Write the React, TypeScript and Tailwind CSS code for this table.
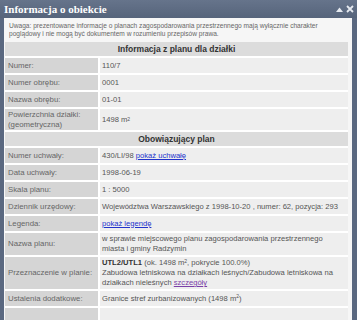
import React from "react";

const Row = ({ label, children }: { label: React.ReactNode; children?: React.ReactNode }) => (
  <div className="flex gap-[2px]">
    <div className="w-[93px] shrink-0 bg-[#d5d5d5] text-[#666] text-[7.8px] px-[3px] py-[1px] min-h-[15px] flex items-center leading-[9.5px]">
      {label}
    </div>
    <div className="flex-1 bg-[#eeeeee] text-[#555] text-[7.6px] px-[2px] py-[1px] min-h-[15px] flex items-center leading-[10px] whitespace-nowrap">
      <div>{children}</div>
    </div>
  </div>
);

const Header = ({ children }: { children: React.ReactNode }) => (
  <div className="bg-[#dcdcdc] h-[14px] flex items-center justify-center text-[8.5px] font-bold text-[#333]">
    {children}
  </div>
);

const Link = ({ children, visited }: { children: React.ReactNode; visited?: boolean }) => (
  <span className={visited ? "text-[#7b3fa8] underline" : "text-[#2233cc] underline"}>{children}</span>
);

export default function App() {
  return (
    <div
      className="w-[357px] h-[320px] bg-[#5a6880] overflow-hidden flex flex-col"
      style={{ fontFamily: '"Liberation Sans", Arial, sans-serif' }}
    >
      <div className="h-[18px] shrink-0 flex items-center justify-between pl-[4px] pr-[3px] bg-gradient-to-b from-[#66748b] to-[#56647b]">
        <span
          className="text-white font-bold text-[11px] leading-none"
          style={{ fontFamily: '"Liberation Serif", "Times New Roman", serif' }}
        >
          Informacja o obiekcie
        </span>
        <div className="flex items-center gap-[3px] text-[#e8ecf2]">
          <svg width="7" height="5" viewBox="0 0 7 5">
            <path d="M0 5 L3.5 0.5 L7 5 Z" fill="#e6eaf0" />
          </svg>
          <svg width="8" height="8" viewBox="0 0 8 8">
            <path d="M1 1 L7 7 M7 1 L1 7" stroke="#e6eaf0" strokeWidth="1.8" />
          </svg>
        </div>
      </div>
      <div className="flex-1 ml-[4px] mr-[5px] bg-[#f6f6f6] px-[1px] pr-[4px] overflow-hidden">
        <div className="text-[6.6px] leading-[7.5px] text-[#666] pl-[4px] pt-[4px] pb-[5px] whitespace-nowrap">
          Uwaga: prezentowane informacje o planach zagospodarowania przestrzennego mają wyłącznie charakter
          <br />
          poglądowy i nie mogą być dokumentem w rozumieniu przepisów prawa.
        </div>
        <div className="flex flex-col gap-[2px] bg-white">
          <Header>Informacja z planu dla działki</Header>
          <Row label="Numer:">110/7</Row>
          <Row label="Numer obrębu:">0001</Row>
          <Row label="Nazwa obrębu:">01-01</Row>
          <Row
            label={
              <span>
                Powierzchnia działki:
                <br />
                (geometryczna)
              </span>
            }
          >
            1498 m<sup className="text-[5px] relative -top-[1px]">2</sup>
          </Row>
          <Header>Obowiązujący plan</Header>
          <Row label="Numer uchwały:">
            430/LI/98 <Link>pokaż uchwałę</Link>
          </Row>
          <Row label="Data uchwały:">1998-06-19</Row>
          <Row label="Skala planu:">1 : 5000</Row>
          <Row label="Dziennik urzędowy:">
            Województwa Warszawskiego z 1998-10-20 , numer: 62, pozycja: 293
          </Row>
          <Row label="Legenda:">
            <Link>pokaż legendę</Link>
          </Row>
          <Row label="Nazwa planu:">
            w sprawie miejscowego planu zagospodarowania przestrzennego
            <br />
            miasta i gminy Radzymin
          </Row>
          <Row label="Przeznaczenie w planie:">
            <b className="text-[#333]">UTL2/UTL1</b> (ok. 1498 m<sup className="text-[5px]">2</sup>, pokrycie 100.0%)
            <br />
            Zabudowa letniskowa na działkach leśnych/Zabudowa letniskowa na
            <br />
            działkach nieleśnych <Link visited>szczegóły</Link>
          </Row>
          <Row label="Ustalenia dodatkowe:">
            Granice stref zurbanizowanych (1498 m<sup className="text-[5px]">2</sup>)
          </Row>
          <Row label="">&nbsp;</Row>
        </div>
      </div>
    </div>
  );
}
